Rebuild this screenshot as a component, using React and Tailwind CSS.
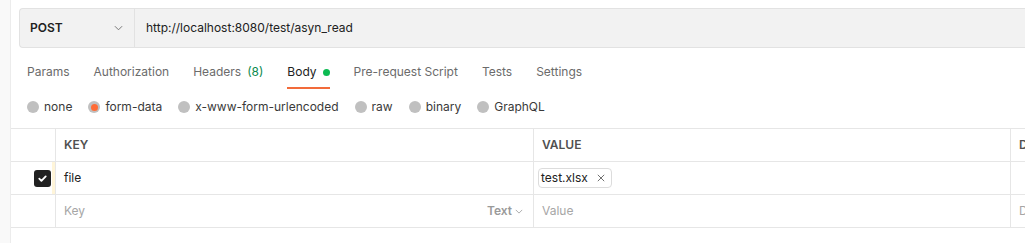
import React from 'react';

const tabs = [
  { label: 'Params' },
  { label: 'Authorization' },
  { label: 'Headers', count: '(8)' },
  { label: 'Body', active: true, dot: true },
  { label: 'Pre-request Script' },
  { label: 'Tests' },
  { label: 'Settings' },
];

const bodyTypes = ['none', 'form-data', 'x-www-form-urlencoded', 'raw', 'binary', 'GraphQL'];

const Chevron = ({ className }) => (
  <svg className={className} viewBox="0 0 10 6" fill="none" stroke="currentColor" strokeWidth="1">
    <path d="M1 1l4 4 4-4" />
  </svg>
);

const App = () => {
  return (
    <div className="flex w-[1025px] h-[243px] overflow-hidden bg-white text-[12px] text-[#212121]" style={{ fontFamily: 'Inter, "Open Sans", sans-serif' }}>
      <div className="w-[11px] shrink-0 bg-[#f9f9f9] border-r border-[#ececec]" />
      <div className="flex-1 min-w-0">
        {/* url bar */}
        <div className="pl-2 pt-2">
          <div className="flex h-[40px] bg-[#f2f2f2] border border-r-0 border-[#e2e2e2] rounded-l-[4px]">
            <div className="w-[115px] flex items-center justify-between pl-[10px] pr-[11px] border-r border-[#e2e2e2]">
              <span className="font-semibold text-[#212121]">POST</span>
              <Chevron className="w-[9px] h-[6px] text-[#6b6b6b]" />
            </div>
            <div className="flex items-center pl-[11px] text-[#212121]">http://localhost:8080/test/asyn_read</div>
          </div>
        </div>

        {/* tabs */}
        <div className="flex gap-[24px] pl-4 pt-[17px]">
          {tabs.map(t => (
            <div key={t.label} className="flex flex-col">
              <div className={'flex items-center gap-[6px] h-[14px] ' + (t.active ? 'text-[#212121]' : 'text-[#6b6b6b]')}>
                <span>{t.label}</span>
                {t.count && <span className="text-[#0a8a4f]">{t.count}</span>}
                {t.dot && <span className="w-[7px] h-[7px] rounded-full bg-[#0cbb52]" />}
              </div>
              <div className={'mt-[8px] h-[2px] ' + (t.active ? 'bg-[#f26b3a]' : '')} />
            </div>
          ))}
        </div>

        {/* body types */}
        <div className="flex items-center gap-[16px] pl-4 mt-[11px] h-[14px]">
          {bodyTypes.map(b => (
            <div key={b} className="flex items-center gap-[5px]">
              <span className="w-[12px] h-[12px] rounded-full bg-[#c0c0c0] flex items-center justify-center">
                {b === 'form-data' && <span className="w-[7px] h-[7px] rounded-full bg-[#ff6c37]" />}
              </span>
              <span className="text-[#3a3a3a]">{b}</span>
            </div>
          ))}
        </div>

        {/* table */}
        <div className="mt-[14px] border-y border-[#e6e6e6]">
          <div className="flex h-[33px] border-b border-[#e6e6e6]">
            <div className="w-[45px] shrink-0 border-r border-[#e6e6e6]" />
            <div className="w-[478px] shrink-0 flex items-center pl-[8px] font-semibold text-[#505050] border-r border-[#e6e6e6]">KEY</div>
            <div className="w-[477px] shrink-0 flex items-center pl-[8px] font-semibold text-[#505050] border-r border-[#e6e6e6]">VALUE</div>
            <div className="flex items-center pl-[8px] font-semibold text-[#505050]">DESCRIPTION</div>
          </div>
          <div className="flex h-[33px] border-b border-[#e6e6e6]">
            <div className="w-[45px] shrink-0 flex items-center justify-end border-r border-[#e6e6e6]">
              <span className="w-[17px] h-[17px] rounded-[3px] bg-[#212121] flex items-center justify-center">
                <svg viewBox="0 0 12 12" className="w-[11px] h-[11px]" fill="none" stroke="white" strokeWidth="2" strokeLinecap="round" strokeLinejoin="round">
                  <path d="M2.5 6.2l2.3 2.3 4.7-4.8" />
                </svg>
              </span>
              <span className="w-[3px] h-full bg-[#fff5d9] ml-[1px]" />
            </div>
            <div className="w-[478px] shrink-0 flex items-center pl-[8px] text-[#212121] border-r border-[#e6e6e6]">file</div>
            <div className="w-[477px] shrink-0 flex items-center pl-[4px] border-r border-[#e6e6e6]">
              <div className="flex items-center h-[20px] w-[74px] border border-[#dcdcdc] rounded-[4px] pl-[2px] gap-[9px]">
                <span className="text-[#212121]">test.xlsx</span>
                <svg viewBox="0 0 10 10" className="w-[8px] h-[8px]" stroke="#6b6b6b" strokeWidth="1.2">
                  <path d="M1 1l8 8M9 1l-8 8" />
                </svg>
              </div>
            </div>
            <div />
          </div>
          <div className="flex h-[32px]">
            <div className="w-[45px] shrink-0 border-r border-[#e6e6e6]" />
            <div className="w-[478px] shrink-0 flex items-center justify-between pl-[8px] pr-[10px] border-r border-[#e6e6e6]">
              <span className="text-[#a6a6a6]">Key</span>
              <span className="flex items-center gap-[3px] font-semibold text-[#9a9a9a]">
                Text
                <Chevron className="w-[8px] h-[5px]" />
              </span>
            </div>
            <div className="w-[477px] shrink-0 flex items-center pl-[8px] text-[#a6a6a6] border-r border-[#e6e6e6]">Value</div>
            <div className="flex items-center pl-[8px] text-[#a6a6a6]">Description</div>
          </div>
        </div>
      </div>
    </div>
  );
};

export default App;
